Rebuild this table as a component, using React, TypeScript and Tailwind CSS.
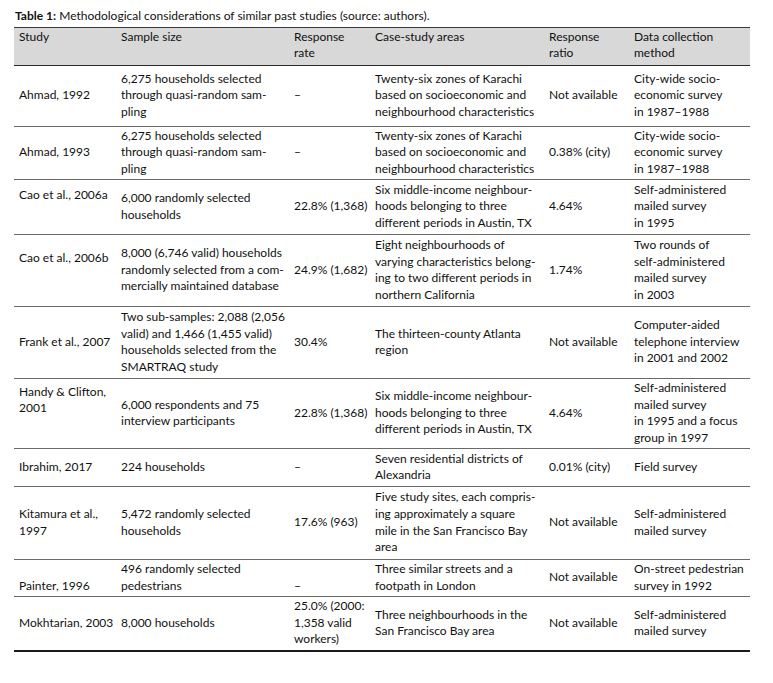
type Cell = { lines: string[]; className?: string };
type Row = { height: string; cells: Cell[] };

const c = (lines: string[], className?: string): Cell => ({ lines, className });

const karachi = [
    "Twenty-six zones of Karachi",
    "based on socioeconomic and",
    "neighbourhood characteristics",
];
const ahmadSample = [
    "6,275 households selected",
    "through quasi-random sam-",
    "pling",
];
const ahmadMethod = ["City-wide socio-", "economic survey", "in 1987–1988"];
const austin = [
    "Six middle-income neighbour-",
    "hoods belonging to three",
    "different periods in Austin, TX",
];

const rows: Row[] = [
    {
        height: "h-[61px]",
        cells: [c(["Ahmad, 1992"]), c(ahmadSample), c(["–"]), c(karachi), c(["Not available"]), c(ahmadMethod)],
    },
    {
        height: "h-[53px]",
        cells: [c(["Ahmad, 1993"]), c(ahmadSample), c(["–"]), c(karachi), c(["0.38% (city)"]), c(ahmadMethod)],
    },
    {
        height: "h-[55px]",
        cells: [
            c(["Cao et al., 2006a"], "pb-[23px]"),
            c(["6,000 randomly selected", "households"]),
            c(["22.8% (1,368)"]),
            c(austin),
            c(["4.64%"]),
            c(["Self-administered", "mailed survey", "in 1995"]),
        ],
    },
    {
        height: "h-[72px]",
        cells: [
            c(["Cao et al., 2006b"], "pb-[24px]"),
            c([
                "8,000 (6,746 valid) households",
                "randomly selected from a com-",
                "mercially maintained database",
            ]),
            c(["24.9% (1,682)"]),
            c([
                "Eight neighbourhoods of",
                "varying characteristics belong-",
                "ing to two different periods in",
                "northern California",
            ]),
            c(["1.74%"]),
            c(["Two rounds of", "self-administered", "mailed survey", "in 2003"]),
        ],
    },
    {
        height: "h-[72px]",
        cells: [
            c(["Frank et al., 2007"]),
            c([
                "Two sub-samples: 2,088 (2,056",
                "valid) and 1,466 (1,455 valid)",
                "households selected from the",
                "SMARTRAQ study",
            ]),
            c(["30.4%"]),
            c(["The thirteen-county Atlanta", "region"]),
            c(["Not available"]),
            c(["Computer-aided", "telephone interview", "in 2001 and 2002"]),
        ],
    },
    {
        height: "h-[70px]",
        cells: [
            c(["Handy & Clifton,", "2001"], "pb-[26px]"),
            c(["6,000 respondents and 75", "interview participants"]),
            c(["22.8% (1,368)"]),
            c(austin),
            c(["4.64%"]),
            c(["Self-administered", "mailed survey", "in 1995 and a focus", "group in 1997"]),
        ],
    },
    {
        height: "h-[38px]",
        cells: [
            c(["Ibrahim, 2017"]),
            c(["224 households"]),
            c(["–"]),
            c(["Seven residential districts of", "Alexandria"]),
            c(["0.01% (city)"]),
            c(["Field survey"]),
        ],
    },
    {
        height: "h-[73px]",
        cells: [
            c(["Kitamura et al.,", "1997"]),
            c(["5,472 randomly selected", "households"]),
            c(["17.6% (963)"]),
            c([
                "Five study sites, each compris-",
                "ing approximately a square",
                "mile in the San Francisco Bay",
                "area",
            ]),
            c(["Not available"]),
            c(["Self-administered", "mailed survey"]),
        ],
    },
    {
        height: "h-[37px]",
        cells: [
            c(["Painter, 1996"], "pt-[18px]"),
            c(["496 randomly selected", "pedestrians"]),
            c(["–"], "pt-[18px]"),
            c(["Three similar streets and a", "footpath in London"]),
            c(["Not available"]),
            c(["On-street pedestrian", "survey in 1992"]),
        ],
    },
    {
        height: "h-[55px]",
        cells: [
            c(["Mokhtarian, 2003"]),
            c(["8,000 households"]),
            c(["25.0% (2000:", "1,358 valid", "workers)"]),
            c(["Three neighbourhoods in the", "San Francisco Bay area"]),
            c(["Not available"]),
            c(["Self-administered", "mailed survey"]),
        ],
    },
];

const headers = [
    ["Study"],
    ["Sample size"],
    ["Response", "rate"],
    ["Case-study areas"],
    ["Response", "ratio"],
    ["Data collection", "method"],
];

const cols = "grid grid-cols-[102px_173px_81px_174px_85px_121px]";

const App = () => {
    return (
        <div
            className="h-[683px] w-[773px] bg-white pl-[14px] pt-[8px] text-[12px] leading-[16.6px] text-[#111111]"
            style={{ fontFamily: "Lato, 'Open Sans', sans-serif" }}
        >
            <p className="pl-[1px]">
                <span className="font-bold">Table 1:</span> Methodological considerations of similar past
                studies (source: authors).
            </p>

            <div className="mt-[2px] w-[736px] border-t border-[#3a3a3a]">

                <div className={`${cols} h-[38px] border-b border-[#2a2a2a] bg-[#d8d8d8] pt-[1px]`}>
                    {headers.map((lines, i) => (
                        <div key={i} className="pl-[5px]">
                            {lines.map((line) => (
                                <div key={line} className="whitespace-nowrap">{line}</div>
                            ))}
                        </div>
                    ))}
                </div>

                {rows.map((row, r) => (
                    <div
                        key={r}
                        className={`${cols} ${row.height} ${
                            r === rows.length - 1 ? "border-b-2 border-[#1a1a1a]" : "border-b border-[#6a6a6a]"
                        }`}
                    >
                        {row.cells.map((cell, i) => (
                            <div
                                key={i}
                                className={`flex flex-col justify-center pl-[5px] ${cell.className ?? ""}`}
                            >
                                {cell.lines.map((line, j) => (
                                    <div key={j} className="whitespace-nowrap">{line}</div>
                                ))}
                            </div>
                        ))}
                    </div>
                ))}

            </div>
        </div>
    );
};

export default App;
